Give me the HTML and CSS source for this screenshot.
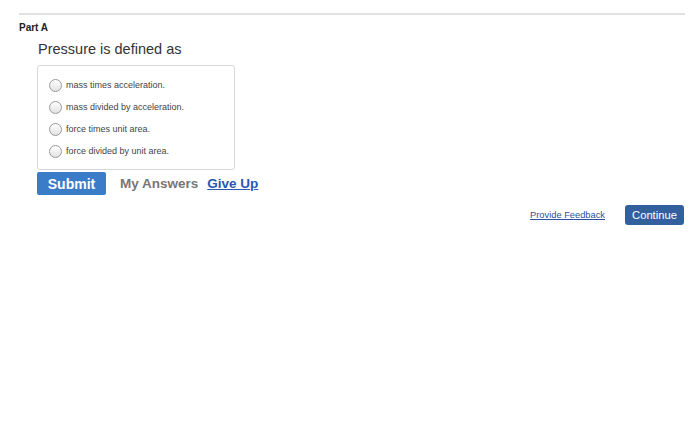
FILE: index.html
```html
<!DOCTYPE html>
<html>
    <head>
        <title>Part A</title>
        <link rel="stylesheet" href="styles.css">
    </head>

    <body>
        <div class="page">
            <div class="part">
                <h4 class="part-title">Part A</h4>
                <div class="question">
                    <p class="prompt">Pressure is defined as</p>
                    <div class="choices">
                        <label class="choice"><span class="radio"></span>mass times acceleration.</label>
                        <label class="choice"><span class="radio"></span>mass divided by acceleration.</label>
                        <label class="choice"><span class="radio"></span>force times unit area.</label>
                        <label class="choice"><span class="radio"></span>force divided by unit area.</label>
                    </div>
                    <div class="line-box">
                        <button class="submit-btn">Submit</button>
                        <span class="my-answers">My Answers</span>
                        <a class="give-up" href="#">Give Up</a>
                    </div>
                </div>
            </div>
            <div class="footer-box">
                <a class="feedback" href="#">Provide Feedback</a>
                <button class="continue-btn">Continue</button>
            </div>
        </div>
    </body>
</html>
```

FILE: styles.css
```css
html {
    height: 100%;
}
body {
    margin: 0px;
    height: 100%;
    background: #fff;
    font-family: "Liberation Sans", Arial, sans-serif;
    color: #333;
}
.page {
    padding: 13px 15px 0px 19px;
}
.part {
    border-top: 2px solid #e2e2e2;
}
.part-title {
    margin: 7px 0px 0px 0px;
    font-size: 10px;
    line-height: 12px;
    font-weight: bold;
    color: #222;
}
.question {
    padding-left: 18px;
}
.prompt {
    margin: 6px 0px 7px 1px;
    font-size: 14.5px;
    line-height: 18px;
    color: #333;
}
.choices {
    width: 196px;
    border: 1px solid #d8d8d8;
    border-radius: 3px;
    padding: 8px 0px 7px 0px;
}
.choice {
    display: flex;
    align-items: center;
    height: 22px;
    padding-left: 11px;
    font-size: 9px;
    color: #444;
}
.radio {
    width: 11px;
    height: 11px;
    border: 1px solid #9a9a9a;
    border-radius: 50%;
    background: linear-gradient(#ffffff, #e2e2e2);
    margin-right: 4px;
    flex: none;
}
.line-box {
    display: flex;
    align-items: center;
    margin-top: 2px;
}
.submit-btn {
    height: 23px;
    width: 69px;
    border: 0px;
    border-radius: 2px;
    background-color: #3b7cc9;
    color: #fff;
    font-family: "Liberation Sans", Arial, sans-serif;
    font-size: 14px;
    font-weight: bold;
    padding: 0px;
    cursor: pointer;
}
.my-answers {
    margin-left: 14px;
    font-size: 13.5px;
    font-weight: bold;
    color: #777;
}
.give-up {
    margin-left: 9px;
    font-size: 13.5px;
    font-weight: bold;
    color: #2a57b0;
}
.footer-box {
    display: flex;
    justify-content: flex-end;
    align-items: center;
    margin-top: 10px;
    margin-right: 1px;
}
.feedback {
    font-size: 9.3px;
    color: #2d4f9e;
    margin-right: 20px;
}
.continue-btn {
    height: 20px;
    width: 59px;
    border: 0px;
    border-radius: 3px;
    background-color: #32609f;
    color: #fff;
    font-family: "Liberation Sans", Arial, sans-serif;
    font-size: 11.2px;
    padding: 0px;
    cursor: pointer;
}
```
